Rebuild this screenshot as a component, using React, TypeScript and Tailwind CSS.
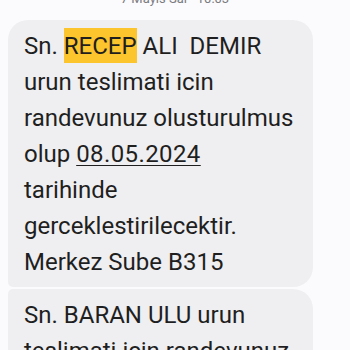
import React from 'react';

export default function App() {
  return (
    <div className="w-[350px] h-[350px] overflow-hidden bg-[#fbfbfd] font-['Roboto',sans-serif] text-[#1f1f1f]">
      {/* tarih başlığı (üstte kesik) */}
      <div className="h-[20px] flex items-end justify-center">
        <span className="text-[13px] leading-[13px] text-[#7a7a7f] mb-[15px]">7 Mayıs Sal · 10:03</span>
      </div>
      <div className="flex flex-col gap-[2px] pl-2">
        <div className="w-[305px] bg-[#efeff1] rounded-[20px] rounded-bl-[5px] px-4 pt-2 pb-[7px] text-[24px] leading-[36px] whitespace-pre-wrap">
          Sn. <span className="inline-block h-[35px] leading-[36px] bg-[#fcc42d]">RECEP</span> ALI  DEMIR
          <br />
          urun teslimati icin
          <br />
          randevunuz olusturulmus
          <br />
          olup <span className="underline decoration-1 underline-offset-[3px] tracking-[0.4px]">08.05.2024</span>
          <br />
          tarihinde
          <br />
          gerceklestirilecektir.
          <br />
          Merkez Sube B315
        </div>
        <div className="w-[305px] bg-[#efeff1] rounded-[20px] rounded-tl-[5px] px-4 pt-2 pb-[7px] text-[24px] leading-[36px]">
          Sn. BARAN ULU urun
          <br />
          teslimati icin randevunuz
          <br />
          olusturulmus
        </div>
      </div>
    </div>
  );
}
